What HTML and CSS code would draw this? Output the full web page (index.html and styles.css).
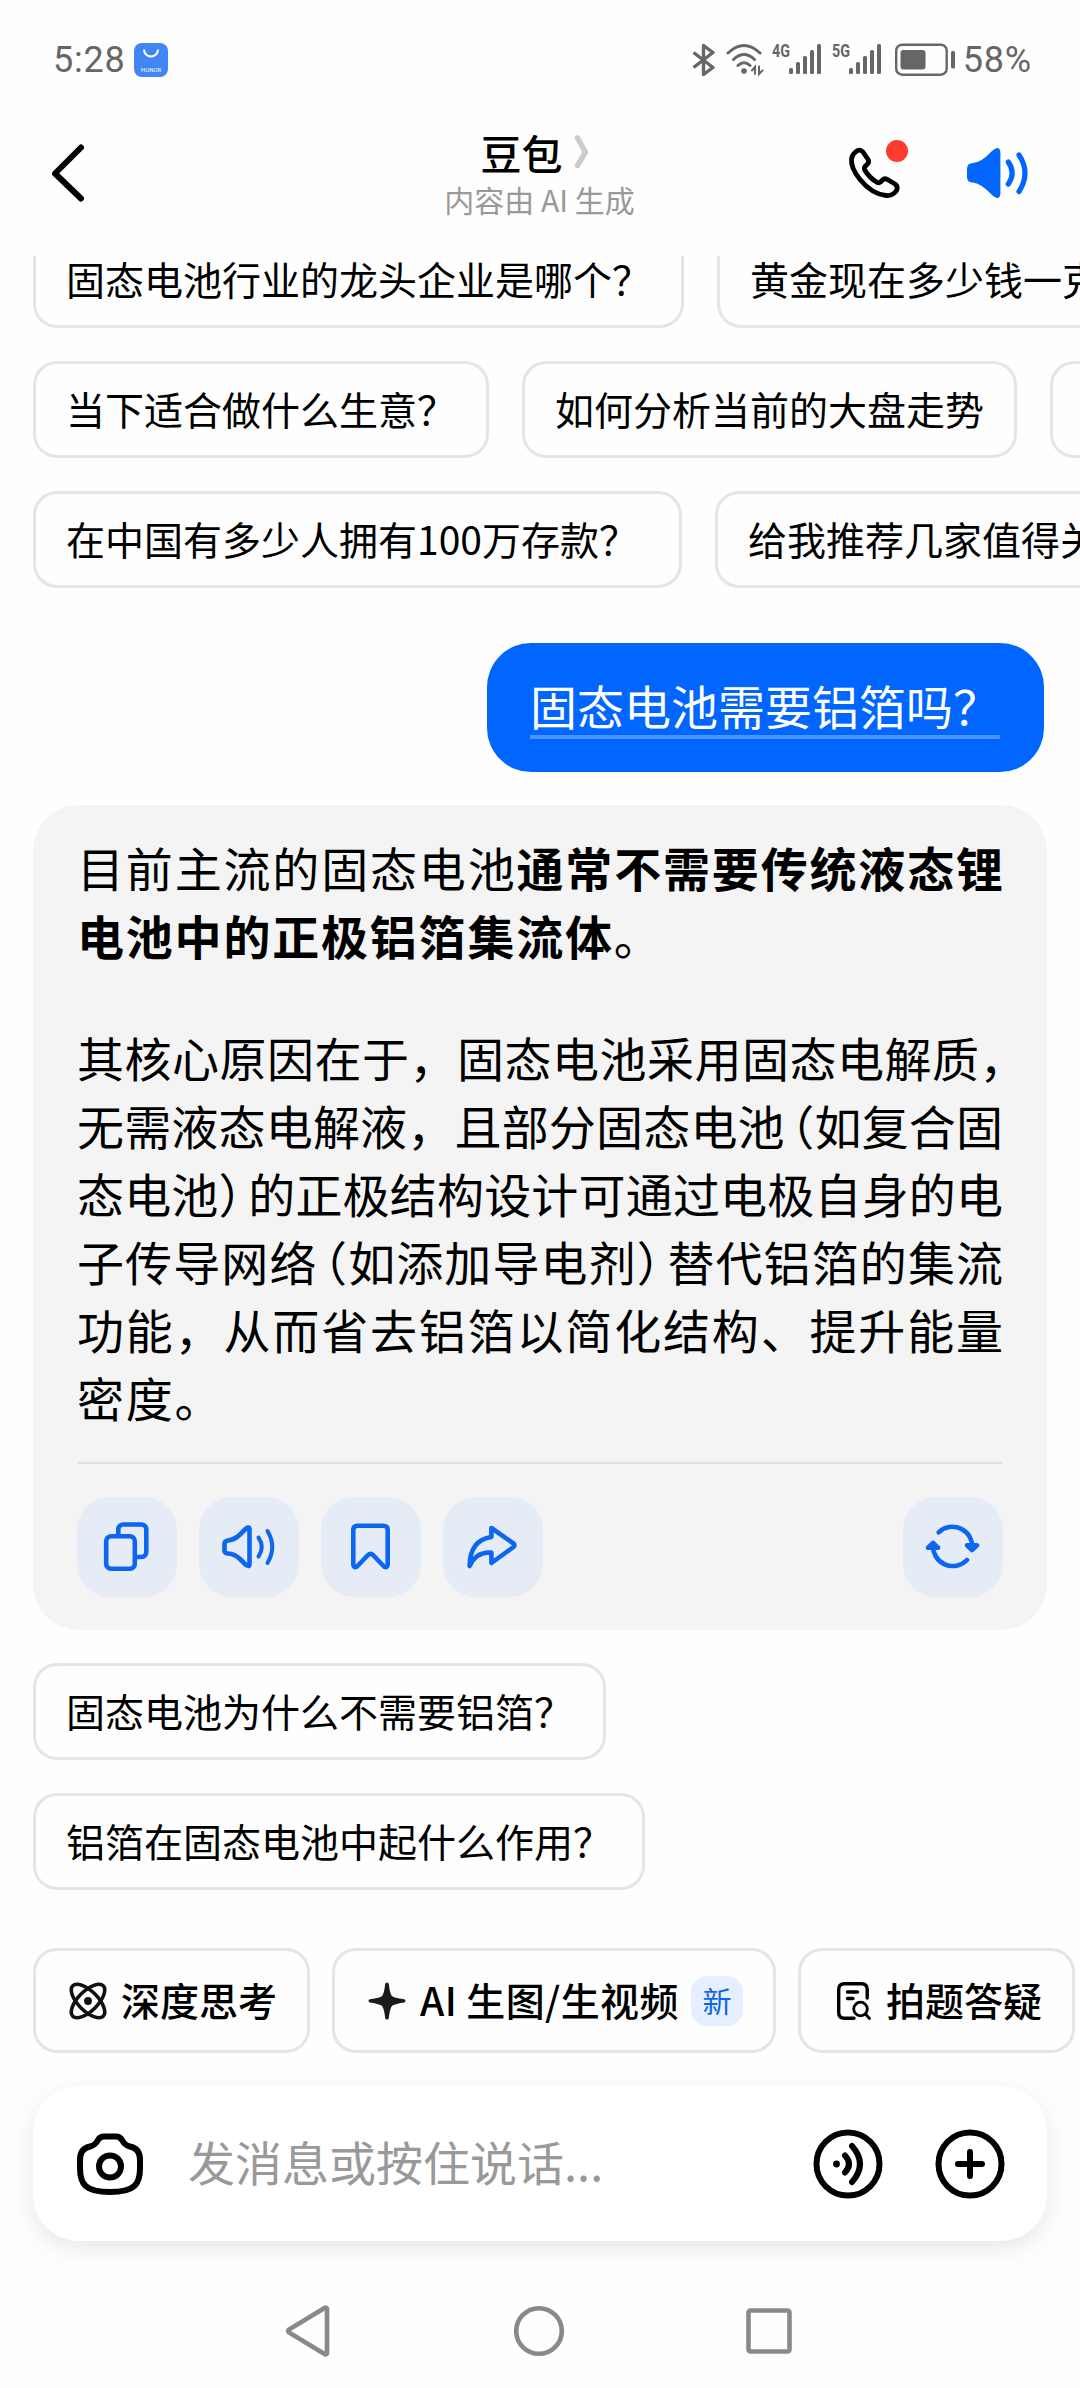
FILE: index.html
```html
<!DOCTYPE html>
<html lang="zh-CN">
<head>
    <meta charset="UTF-8">
    <meta name="viewport" content="width=device-width, initial-scale=1.0">
    <title>豆包</title>
    <link rel="stylesheet" href="styles.css">
</head>
<body>
<div class="status-bar">
    <span class="time">5:28</span>
    <svg class="app-badge" width="34" height="34" viewBox="0 0 34 34">
        <rect width="34" height="34" rx="8" fill="#4286f5"/>
        <path d="M10 6.5a7 7 0 0 0 14 0" fill="none" stroke="#fff" stroke-width="2"/>
        <text x="7" y="28.5" textLength="20" lengthAdjust="spacingAndGlyphs" font-size="5" fill="#fff">HONOR</text>
    </svg>
    <div class="status-icons">
        <svg width="24" height="34" viewBox="0 0 24 34" fill="none" stroke="#666" stroke-width="3.4" stroke-linejoin="round">
            <path d="M1.5 9.5L21 24.5L11.5 31.5V2.5L21 9.5L1.5 24.5"/>
        </svg>
        <svg class="wifi" width="38" height="34" viewBox="0 0 38 34" fill="none" stroke="#666" stroke-width="3" stroke-linecap="round">
            <path d="M2 10Q18 -5 34 10M7.500 16.500Q18 6.500 28.500 16.500M12 22.500Q18 17 24 22.500"/>
            <circle cx="18" cy="28" r="2.800" fill="#666" stroke="none"/>
            <path d="M29 31V24l-3 3.500M33 23.500V31l3.500-3.500" stroke-width="2"/>
        </svg>
        <svg class="signal" width="50" height="34" viewBox="0 0 50 34" fill="#666">
            <text x="0" y="14" textLength="18" lengthAdjust="spacingAndGlyphs" class="net">4G</text>
            <rect x="17" y="25" width="4" height="6" rx="1.500"/>
            <rect x="24" y="19" width="4" height="12" rx="1.500"/>
            <rect x="31" y="13" width="4" height="18" rx="1.500"/>
            <rect x="38" y="7" width="4" height="24" rx="1.500"/>
            <rect x="45" y="1" width="4" height="30" rx="1.500"/>
        </svg>
        <svg class="signal" width="50" height="34" viewBox="0 0 50 34" fill="#666">
            <text x="0" y="14" textLength="18" lengthAdjust="spacingAndGlyphs" class="net">5G</text>
            <rect x="17" y="25" width="4" height="6" rx="1.500"/>
            <rect x="24" y="19" width="4" height="12" rx="1.500"/>
            <rect x="31" y="13" width="4" height="18" rx="1.500"/>
            <rect x="38" y="7" width="4" height="24" rx="1.500"/>
            <rect x="45" y="1" width="4" height="30" rx="1.500"/>
        </svg>
        <svg class="battery" width="60" height="34" viewBox="0 0 60 34">
            <rect x="1.200" y="1.700" width="50.500" height="30" rx="6" fill="none" stroke="#666" stroke-width="2.400"/>
            <rect x="5.500" y="7" width="25" height="19.500" rx="3" fill="#666"/>
            <rect x="56" y="8" width="4" height="17.500" rx="1.500" fill="#666"/>
        </svg>
    </div>
    <span class="percent">58%</span>
</div>

<header class="header">
    <svg class="back" width="36" height="62" viewBox="0 0 36 62" fill="none" stroke="#000" stroke-width="6" stroke-linecap="round" stroke-linejoin="round">
        <path d="M31 5.500L5 31.500L31 56.500"/>
    </svg>
    <div class="title">
        <h1>豆包<svg width="16" height="36" viewBox="0 0 16 36" fill="none" stroke="#ccc" stroke-width="5.500" stroke-linecap="round" stroke-linejoin="round"><path d="M3.500 4L11.500 18L3.500 31.500"/></svg></h1>
        <p>内容由 AI 生成</p>
    </div>
    <div class="header-actions">
        <div class="call">
            <svg width="60" height="60" viewBox="0 0 60 60" fill="none" stroke="#000" stroke-width="4.800" stroke-linejoin="round">
                <path d="M10 9.500Q14.500 5 18 9L23 16.500Q24.500 19 22.500 21L20 23.500Q18.800 25 19.800 27Q24 34.500 32 39.300Q34 40.400 35.500 39L37.500 37Q39.500 35 42 36.300L50 41Q53.500 43.500 51.500 47.500Q48 53 41 52.500C30 51.500 22 45 15 36.500C9 29 6 21 6.500 16Q7 12 10 9.500Z"/>
            </svg>
            <i class="dot"></i>
        </div>
        <svg width="64" height="60" viewBox="0 0 64 60">
            <path d="M27 8Q31 4.500 33 5Q35.400 6 35.400 10V50Q35.400 54 33 55Q31 55.500 27 52Q17 41 8 39.500Q2 39.500 2 34V26Q2 20 8 20Q17 19 27 8Z" fill="#06f"/>
            <path d="M43.300 19Q51 30 43.300 41M54 12Q66 30 54 48.500" fill="none" stroke="#06f" stroke-width="5.200" stroke-linecap="round"/>
        </svg>
    </div>
</header>

<main class="chat">
    <div class="chips chips-top">
        <div class="chip-row">
            <div class="chip">固态电池行业的龙头企业是哪个？</div>
            <div class="chip">黄金现在多少钱一克</div>
        </div>
        <div class="chip-row">
            <div class="chip">当下适合做什么生意？</div>
            <div class="chip">如何分析当前的大盘走势</div>
            <div class="chip chip-cut"></div>
        </div>
        <div class="chip-row">
            <div class="chip chip-wide">在中国有多少人拥有100万存款？</div>
            <div class="chip">给我推荐几家值得关注</div>
        </div>
    </div>

    <div class="question"><span>固态电池需要铝箔吗？</span></div>

    <div class="answer">
        <p>目前主流的固态电池<b>通常不需要传统液态锂<span class="tail">电池中的正极铝箔集流体</span></b>。</p>
        <p>其核心原因在于，固态电池采用固态电解质<span class="half">，</span>无需液态电解液，且部分固态电池<span class="half open">（</span>如复合固态电池<span class="half close">）</span>的正极结构设计可通过电极自身的电子传导网络<span class="half open">（</span>如添加导电剂<span class="half close">）</span>替代铝箔的集流功能，从而省去铝箔以简化结构、提升能量<span class="tail">密度。</span></p>
        <div class="actions">
            <div class="action">
                <svg viewBox="0 0 100 100"><rect x="29.200" y="39.200" width="28.600" height="32.600" rx="5"/><path d="M41.300 38V32.500a5 5 0 0 1 5-5H64.300a5 5 0 0 1 5 5V55a5 5 0 0 1-5 5H59"/></svg>
            </div>
            <div class="action">
                <svg viewBox="0 0 100 100"><path d="M47 31.500L41 37.500Q36 42.500 29 43.500Q25.500 44 25.500 47V53.500Q25.500 56 29 56.500Q36 57 41 62L47 68Q50.500 70.500 50.500 67V32.500Q50.500 29 47 31.500Z"/><path d="M59.500 40.500Q66 50 59.500 59.500M68.500 34Q78 50 68.500 66" stroke-width="4"/></svg>
            </div>
            <div class="action">
                <svg viewBox="0 0 100 100"><path d="M36.500 28.800H62.500Q66.700 28.800 66.700 33V67.500Q66.500 71.500 63 69.500L52 58Q49.500 55.800 47 58L36 69.500Q32.500 71.500 32.300 67.500V33Q32.300 28.800 36.500 28.800Z"/></svg>
            </div>
            <div class="action">
                <svg viewBox="0 0 100 100"><path d="M48.400 31L70.500 46.500Q72.500 48.300 70.500 50L48.400 66V55.500Q33 54.500 26.600 69Q27 43 48.400 40Z"/></svg>
            </div>
            <div class="action refresh">
                <svg viewBox="0 0 100 100"><path d="M35.700 35.300A19.800 19.800 0 0 1 69.200 51M64 48.300L69 53L74 48.300ZM64 63A19.800 19.800 0 0 1 30 48M25 50.700L30 46L35 50.700Z"/></svg>
            </div>
        </div>
    </div>

    <div class="chips chips-follow">
        <div class="chip-row"><div class="chip">固态电池为什么不需要铝箔？</div></div>
        <div class="chip-row"><div class="chip">铝箔在固态电池中起什么作用？</div></div>
    </div>
</main>

<div class="tools">
    <div class="tool">
        <svg width="42" height="42" viewBox="0 0 42 42" fill="none" stroke="#111" stroke-width="3.600">
            <ellipse cx="21" cy="21" rx="21.500" ry="9.800" transform="rotate(45 21 21)"/>
            <ellipse cx="21" cy="21" rx="21.500" ry="9.800" transform="rotate(-45 21 21)"/>
            <circle cx="21" cy="21" r="3.900" fill="#111" stroke="none"/>
        </svg>
        <span>深度思考</span>
    </div>
    <div class="tool">
        <svg width="42" height="42" viewBox="0 0 42 42" fill="#1a1a1a">
            <path d="M21 2.500Q22.500 2.500 22.800 4Q24 14 26 16Q28 18 38 19.200Q39.500 19.500 39.500 21Q39.500 22.300 38 22.500Q28 24 26 26Q24 28 22.800 38Q22.500 39.500 21 39.500Q19.500 39.500 19.200 38Q18 28 16 26Q14 24 4 22.500Q2.500 22.300 2.500 21Q2.500 19.500 4 19.200Q14 18 16 16Q18 14 19.200 4Q19.500 2.500 21 2.500Z"/>
        </svg>
        <span class="draw">AI 生图/生视频</span>
        <span class="new">新</span>
    </div>
    <div class="tool">
        <svg width="42" height="42" viewBox="0 0 42 42" fill="none" stroke="#000" stroke-width="3.400" stroke-linecap="round">
            <path d="M35.200 18V9.500Q35.200 3.700 29.500 3.700H12.500Q6.700 3.700 6.700 9.500V32.500Q6.700 38.300 12.500 38.300H22"/>
            <path d="M15.500 12H25.500M15.500 18.500H21"/>
            <circle cx="28.500" cy="29" r="6.800" stroke-width="2.800"/>
            <path d="M33.500 34L37.500 38.500" stroke-width="2.800"/>
        </svg>
        <span>拍题答疑</span>
    </div>
</div>

<div class="input-box">
    <svg width="66" height="62" viewBox="0 0 66 62" fill="none" stroke="#000" stroke-width="6">
        <path d="M27 3.500H39Q43 3.500 45 7C47 11 49 12.500 53 13.500C60 14.800 63 19 63 27V35C63 51 58 59 33 59C8 59 3 51 3 35V27C3 19 6 14.800 13 13.500C17 12.500 19 11 21 7Q23 3.500 27 3.500Z"/>
        <circle cx="33" cy="33.500" r="11"/>
    </svg>
    <div class="placeholder">发消息或按住说话...</div>
    <svg width="70" height="70" viewBox="0 0 70 70" fill="none" stroke="#000" stroke-width="6" stroke-linecap="round">
        <circle cx="35" cy="35" r="31.500"/>
        <circle cx="23.500" cy="35" r="3.400" fill="#000" stroke="none"/>
        <path d="M32 26.500Q40 35 32 43.500M39 17Q55 35 39 53"/>
    </svg>
    <svg class="plus" width="70" height="70" viewBox="0 0 70 70" fill="none" stroke="#000" stroke-width="6" stroke-linecap="round">
        <circle cx="35" cy="35" r="31.500"/>
        <path d="M23 35H47M35 23V47"/>
    </svg>
</div>

<nav class="nav-bar">
    <svg width="50" height="54" viewBox="0 0 50 54"><path d="M43 4.500V49.500Q42 51 40.500 50L5 28.500Q3.500 27 5 25.500L40.500 4Q42 3 43 4.500Z"/></svg>
    <svg width="54" height="54" viewBox="0 0 54 54"><circle cx="27" cy="27" r="22.800"/></svg>
    <svg width="50" height="54" viewBox="0 0 50 54"><rect x="4.500" y="6.500" width="41" height="41" rx="2"/></svg>
</nav>
</body>
</html>
```
FILE: styles.css
```css
* {
    box-sizing: border-box;
    margin: 0;
    padding: 0;
}

body {
    width: 1080px;
    height: 2388px;
    overflow: hidden;
    display: flex;
    flex-direction: column;
    background: #fefefe;
    color: #000;
    font-family: "Noto Sans CJK SC", sans-serif;
}

svg {
    display: block;
    flex: none;
}

/* status bar */
.status-bar {
    height: 90px;
    padding: 30px 48px 0 53px;
    display: flex;
    align-items: center;
    color: #666;
    font-family: Roboto, sans-serif;
    font-size: 36px;
    letter-spacing: 0.8px;
}

.app-badge {
    margin-left: 8px;
    letter-spacing: 0;
}

.status-icons {
    display: flex;
    margin-left: auto;
    letter-spacing: 0;
}

.wifi {
    margin-left: 10px;
}

.signal {
    margin-left: 10px;
}

.wifi + .signal {
    margin-left: 8px;
}

.net {
    font-size: 18px;
    font-weight: 700;
}

.battery {
    margin-left: 13px;
}

.percent {
    margin-left: 8px;
}

/* header */
.header {
    height: 166px;
    padding: 0 51px 0 50px;
    display: grid;
    grid-template-columns: 1fr auto 1fr;
    align-items: center;
}

.title {
    padding-top: 3px;
    text-align: center;
}

.title h1 {
    display: flex;
    justify-content: center;
    align-items: center;
    gap: 12px;
    font-size: 41px;
    font-weight: 500;
    line-height: 48px;
    margin-right: 8px;
}

.title p {
    color: #999;
    font-size: 30px;
    line-height: 46px;
}

.header-actions {
    display: flex;
    justify-content: flex-end;
    gap: 60px;
}

.call {
    position: relative;
}

.dot {
    position: absolute;
    top: -3px;
    right: -3px;
    width: 22px;
    height: 22px;
    border-radius: 50%;
    background: #ff3b30;
}

/* chat */
.chat {
    height: 1692px;
    overflow: hidden;
    padding: 0 33px;
}

.chips {
    display: flex;
    flex-direction: column;
    gap: 33px;
}

.chips-top {
    margin-top: -25px;
}

.chip-row {
    display: flex;
    gap: 33px;
}

.chip {
    flex: none;
    height: 97px;
    padding: 0 30px;
    border: 3px solid #e5e5e5;
    border-radius: 24px;
    font-size: 39px;
    line-height: 89px;
    white-space: nowrap;
}

.chip-wide {
    width: 649px;
}

.chip-cut {
    width: 200px;
}

.question {
    width: 557px;
    height: 129px;
    margin: 55px 3px 0 auto;
    padding: 28px 43px 0;
    border-radius: 44px;
    background: #06f;
    color: #fff;
    font-size: 47px;
    line-height: 68px;
    white-space: nowrap;
}

.question span {
    display: block;
    width: 470px;
    height: 68px;
    border-bottom: 4px solid #4a95ff;
}

.answer {
    height: 825px;
    margin-top: 33px;
    padding: 28px 44px 0;
    border-radius: 46px;
    background: #f4f4f4;
}

.answer p {
    font-size: 47px;
    line-height: 68px;
    text-align: justify;
    margin-bottom: 54px;
}

.tail {
    letter-spacing: 1.8px;
}

.half {
    font-feature-settings: "halt";
}

.open {
    margin-left: 6px;
}

.close {
    margin-right: 6px;
}

.actions {
    display: flex;
    gap: 22px;
    margin-top: -23px;
    padding-top: 33px;
    border-top: 2px solid #e0e0e0;
}

.action {
    width: 100px;
    height: 100px;
    border-radius: 33px;
    background: #e5ecf6;
}

.action svg {
    fill: none;
    stroke: #0c66f0;
    stroke-width: 4.6;
    stroke-linecap: round;
    stroke-linejoin: round;
}

.refresh {
    margin-left: auto;
}

.chips-follow {
    margin-top: 33px;
}

/* bottom tools */
.tools {
    display: flex;
    gap: 22px;
    padding-left: 33px;
}

.tool {
    flex: none;
    height: 105px;
    padding: 0 30px 0 31px;
    display: flex;
    align-items: center;
    gap: 12px;
    border: 3px solid #e5e5e5;
    border-radius: 24px;
    font-size: 39px;
    font-weight: 500;
    line-height: 58px;
    white-space: nowrap;
}

.tool span {
    margin-bottom: 3px;
}

.draw {
    letter-spacing: 0.4px;
}

.tool .new {
    width: 52px;
    height: 50px;
    margin-bottom: 0;
    border-radius: 16px;
    background: #e5efff;
    color: #0c66e8;
    font-size: 29px;
    font-weight: 400;
    line-height: 48px;
    text-align: center;
}

.input-box {
    height: 155px;
    margin: 33px 33px 0;
    padding: 0 42px 0 44px;
    display: flex;
    align-items: center;
    border-radius: 46px;
    background: #fff;
    box-shadow: 0 8px 24px rgba(0, 0, 0, 0.09);
}

.placeholder {
    flex: 1;
    margin: 0 0 6px 45px;
    color: #999;
    font-size: 47px;
    line-height: 68px;
}

.plus {
    margin-left: 52px;
}

/* system navigation */
.nav-bar {
    margin-top: 63px;
    display: flex;
    justify-content: space-between;
    padding: 0 286px 0 284px;
}

.nav-bar svg {
    fill: none;
    stroke: #898989;
    stroke-width: 4.6;
}
```
